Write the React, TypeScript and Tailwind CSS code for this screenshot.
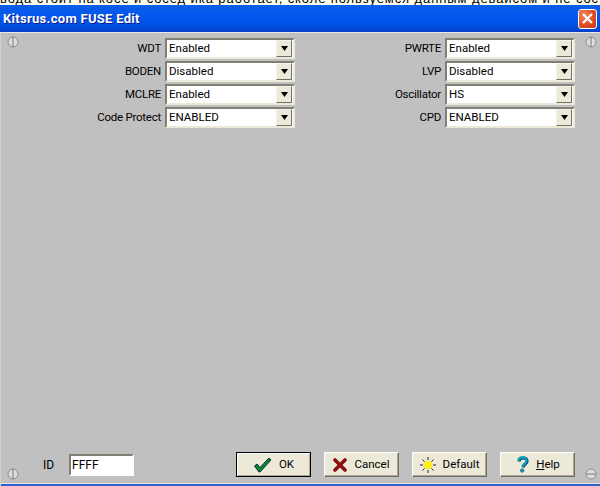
const LEFT_FUSES = [
  { label: "WDT", value: "Enabled" },
  { label: "BODEN", value: "Disabled" },
  { label: "MCLRE", value: "Enabled" },
  { label: "Code Protect", value: "ENABLED" },
];

const RIGHT_FUSES = [
  { label: "PWRTE", value: "Enabled" },
  { label: "LVP", value: "Disabled" },
  { label: "Oscillator", value: "HS" },
  { label: "CPD", value: "ENABLED" },
];

// Splitter grip: the small grey circle at each corner of the panel
function Grip({ className, flat }: { className: string; flat?: boolean }) {
  return (
    <svg className={className} width="12" height="12" viewBox="0 0 12 12">
      <circle cx="6" cy="6" r="5" fill="#dcdcdc" stroke="#8c8c8c" />
      {flat ? (
        <path d="M1 6H11" stroke="#7a7a7a" />
      ) : (
        <path d="M6 1V11" stroke="#7a7a7a" />
      )}
    </svg>
  );
}

function Combo({ value }: { value: string }) {
  return (
    <div className="flex h-[21px] items-center border-2 border-t-[#808074] border-r-[#ece9d8] border-b-[#ece9d8] border-l-[#808074] bg-white pl-[2px] pr-[1px]">
      <span className="flex-1 text-[11.5px] leading-none text-black">{value}</span>
      <span className="flex h-[17px] w-[16px] items-center justify-center border border-t-[#f5f3ea] border-r-[#716f64] border-b-[#716f64] border-l-[#f5f3ea] bg-[#ece9d8]">
        <svg width="9" height="5" viewBox="0 0 9 5">
          <path d="M1 0H8L4.5 5Z" fill="#000" />
        </svg>
      </span>
    </div>
  );
}

function FuseGroup({
  fuses,
  className,
}: {
  fuses: { label: string; value: string }[];
  className: string;
}) {
  return (
    <div className={`grid grid-cols-[1fr_130px] items-center gap-x-[4px] gap-y-[2px] ${className}`}>
      {fuses.map((fuse) => (
        <div key={fuse.label} className="contents">
          <span className="text-right text-[11.5px] leading-none tracking-[-0.25px] text-black">{fuse.label}</span>
          <Combo value={fuse.value} />
        </div>
      ))}
    </div>
  );
}

function ActionButton({
  children,
  primary,
  className,
}: {
  children: React.ReactNode;
  primary?: boolean;
  className?: string;
}) {
  return (
    <button
      type="button"
      className={`flex h-[25px] w-[75px] items-center justify-center gap-[7px] bg-[#ece9d8] text-[11.5px] leading-none text-black ${
        primary
          ? "border border-black shadow-[inset_1px_1px_#fff,inset_-1px_-1px_#aca899]"
          : "border border-t-white border-r-[#716f64] border-b-[#716f64] border-l-white shadow-[inset_-1px_-1px_#aca899]"
      } ${className ?? ""}`}
    >
      {children}
    </button>
  );
}

export default function App() {
  return (
    <div className="relative flex h-[486px] w-[600px] flex-col overflow-hidden bg-[#c0c0c0] font-['Roboto','Liberation_Sans',Arial,sans-serif]">
      {/* Page behind the window, only its last text line still shows */}
      <div className="h-[5px] overflow-hidden whitespace-nowrap bg-[#fffff0] font-['Liberation_Sans',Arial,sans-serif]">
        <p className="mt-[-9px] text-[13px] leading-[15px] tracking-[0.9px] text-black">
          вода стоит на косе и сосед ика работает, сколе пользуемся данным девайсом и не сос
        </p>
      </div>

      {/* Title bar */}
      <div className="flex h-[27px] items-center justify-between bg-[linear-gradient(#0a5de8_0%,#0258ee_45%,#0050e4_75%,#0840c8_100%)] pl-[3px] pr-[3px]">
        <span className="text-[13px] font-bold tracking-[0.3px] text-white [text-shadow:1px_1px_#0f1c8c]">
          Kitsrus.com FUSE Edit
        </span>
        <span className="flex h-[20px] w-[19px] items-center justify-center rounded-[3px] border border-white bg-[radial-gradient(circle_at_30%_30%,#ef8a62,#dc4a22_60%,#c03a18)]">
          <svg width="13" height="13" viewBox="0 0 13 13">
            <path d="M2 2L11 11M11 2L2 11" stroke="#fff" strokeWidth="2.2" />
          </svg>
        </span>
      </div>

      {/* Fuse panel */}
      <div className="relative flex flex-1 flex-col border-t border-t-[#e8e8e8] border-l border-l-[#d4d0c8] pt-[5px]">
        <Grip className="absolute left-[6px] top-[3px]" />
        <Grip className="absolute right-[3px] top-[3px]" />
        <Grip className="absolute bottom-[6px] left-[6px]" />
        <Grip className="absolute bottom-[6px] right-[3px]" flat />

        <div className="flex">
          <FuseGroup fuses={LEFT_FUSES} className="w-[294px]" />
          <FuseGroup fuses={RIGHT_FUSES} className="w-[280px]" />
        </div>

        <div className="mt-auto mb-[6px] flex items-center">
          <span className="ml-[42px] w-[26px] text-[12px] leading-none text-black">ID</span>
          <div className="flex h-[22px] w-[65px] items-center border-2 border-t-[#808074] border-r-white border-b-white border-l-[#808074] bg-white pl-[1px] text-[12px] leading-none text-black">
            FFFF
          </div>
          <ActionButton primary className="ml-[102px]">
            <svg width="19" height="16" viewBox="0 0 19 16">
              <path
                d="M1.5 9L4 7L7 10.5L16 1L18 3L7 15H6Z"
                fill="#0c8a1e"
                stroke="#0a2a5c"
                strokeWidth="1"
              />
            </svg>
            OK
          </ActionButton>
          <ActionButton className="ml-[13px]">
            <svg width="14" height="14" viewBox="0 0 14 14">
              <path
                d="M2 2L12 12M12 2L2 12"
                stroke="#8c1010"
                strokeWidth="3.6"
                strokeLinecap="round"
              />
            </svg>
            Cancel
          </ActionButton>
          <ActionButton className="ml-[13px]">
            <svg width="16" height="16" viewBox="0 0 16 16">
              <path
                d="M8 0V3M8 13V16M0 8H3M13 8H16M2.5 2.5L4.5 4.5M11.5 11.5L13.5 13.5M13.5 2.5L11.5 4.5M4.5 11.5L2.5 13.5"
                stroke="#222"
              />
              <circle cx="8" cy="8" r="4" fill="#ffee10" />
            </svg>
            Default
          </ActionButton>
          <ActionButton className="ml-[13px]">
            <svg width="14" height="17" viewBox="0 0 14 17">
              <path
                d="M3.5 5C3.5 2.5 5.5 1.5 7.5 1.5C10 1.5 11.5 3 11.5 5C11.5 7.5 8 7.5 7.5 11"
                fill="none"
                stroke="#0a3a6a"
                strokeWidth="2.8"
                transform="translate(0.7 0.5)"
              />
              <path
                d="M3.5 5C3.5 2.5 5.5 1.5 7.5 1.5C10 1.5 11.5 3 11.5 5C11.5 7.5 8 7.5 7.5 11"
                fill="none"
                stroke="#08a0b8"
                strokeWidth="2.4"
              />
              <circle cx="7.2" cy="14.5" r="1.8" fill="#08a0b8" stroke="#0a3a6a" strokeWidth="0.5" />
            </svg>
            <span>
              <span className="underline">H</span>elp
            </span>
          </ActionButton>
        </div>

        <div className="h-[1px] bg-[#e8e8e8]" />
        <div className="h-[2px] bg-[#2f62c8]" />
      </div>
    </div>
  );
}
